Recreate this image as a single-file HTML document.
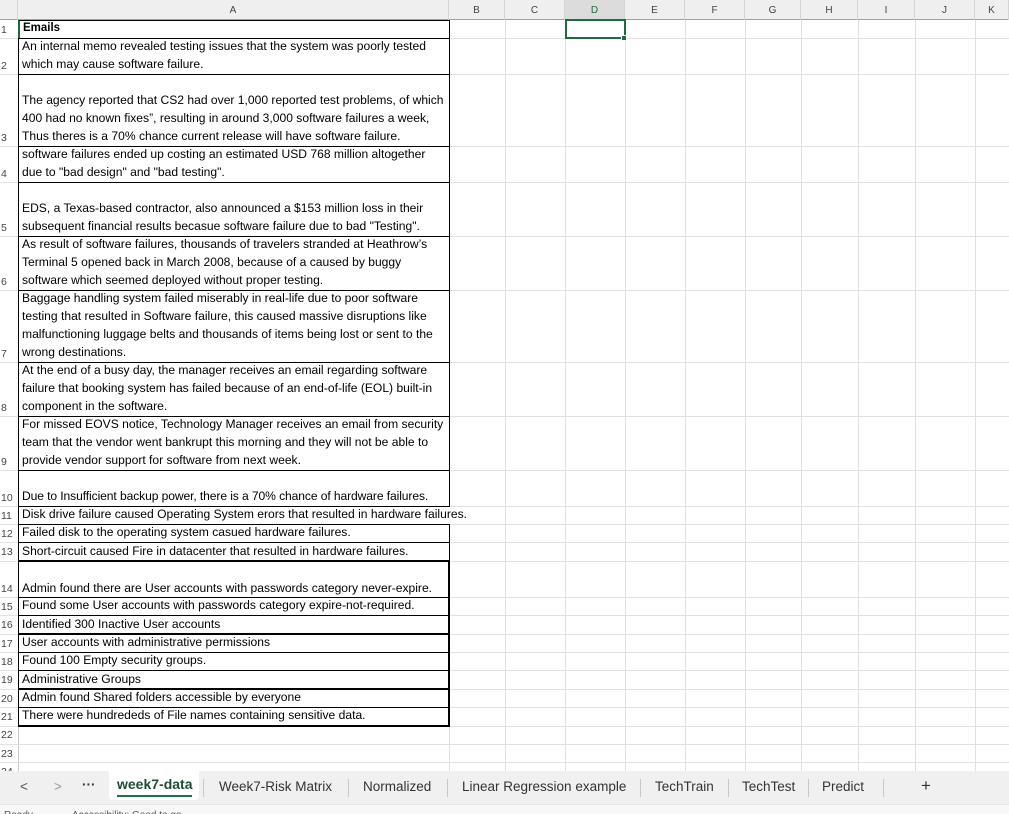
<!DOCTYPE html>
<html><head><meta charset="utf-8"><style>
*{margin:0;padding:0;box-sizing:border-box}
body{width:1009px;height:814px;overflow:hidden;background:#fff;font-family:"Liberation Sans",Arial,sans-serif;font-size:11px;color:#000;position:relative}
.ch{position:absolute;top:0;height:20px;background:#efefef;border-bottom:1px solid #a0a0a0;}
.cl{position:absolute;top:0;height:20px;line-height:22px;text-align:center;color:#444;font-size:10px;border-right:1px solid #d4d4d4}
.vl{position:absolute;top:20px;height:751px;width:1px;background:#e1e1e1}
.hl{position:absolute;left:0;width:1009px;height:1px;background:#e1e1e1}
.rn{position:absolute;left:0;width:18px;font-size:10.5px;color:#444;padding-left:1px;line-height:14px}
.c{position:absolute;left:18px;width:432px;padding-left:3px;line-height:18px;display:flex;flex-direction:column;justify-content:flex-end;white-space:nowrap;border-left:1px solid #000;border-right:1px solid #000;border-top:1px solid #000;font-size:12.1px;padding-bottom:1px}
.tabs{position:absolute;left:0;top:771px;width:1009px;height:33px;background:#f0f0f0;font-size:13.5px;color:#333}
.tab{position:absolute;top:8px}
.sep{position:absolute;top:8px;width:1px;height:18px;background:#c8c8c8}
.status{position:absolute;left:0;top:804px;width:1009px;height:10px;background:#f8f8f8;border-top:1px solid #e6e6e6;overflow:hidden}
.t2{border-right:2px solid #000}
</style></head><body>
<div class="ch" style="left:0;width:1009px"></div>
<div class="cl" style="left:0;width:18px;"></div>
<div class="cl" style="left:18px;width:431px">A</div>
<div class="cl" style="left:449px;width:56px">B</div>
<div class="cl" style="left:505px;width:60px">C</div>
<div class="cl" style="left:565px;width:60px;background:#dcdcdc;color:#1e6b3c">D</div>
<div class="cl" style="left:625px;width:60px">E</div>
<div class="cl" style="left:685px;width:60px">F</div>
<div class="cl" style="left:745px;width:56px">G</div>
<div class="cl" style="left:801px;width:57px">H</div>
<div class="cl" style="left:858px;width:57px">I</div>
<div class="cl" style="left:915px;width:60px">J</div>
<div class="cl" style="left:975px;width:34px">K</div>
<div class="vl" style="left:18px;background:#c8c8c8"></div>
<div class="vl" style="left:449px"></div><div class="vl" style="left:505px"></div><div class="vl" style="left:565px"></div><div class="vl" style="left:625px"></div><div class="vl" style="left:685px"></div><div class="vl" style="left:745px"></div><div class="vl" style="left:801px"></div><div class="vl" style="left:858px"></div><div class="vl" style="left:915px"></div><div class="vl" style="left:975px"></div>
<div class="hl" style="top:38px"></div><div class="hl" style="top:74px"></div><div class="hl" style="top:146px"></div><div class="hl" style="top:182px"></div><div class="hl" style="top:236px"></div><div class="hl" style="top:290px"></div><div class="hl" style="top:362px"></div><div class="hl" style="top:416px"></div><div class="hl" style="top:470px"></div><div class="hl" style="top:506px"></div><div class="hl" style="top:524px"></div><div class="hl" style="top:542px"></div><div class="hl" style="top:561px"></div><div class="hl" style="top:597px"></div><div class="hl" style="top:615px"></div><div class="hl" style="top:634px"></div><div class="hl" style="top:652px"></div><div class="hl" style="top:670px"></div><div class="hl" style="top:689px"></div><div class="hl" style="top:707px"></div><div class="hl" style="top:726px"></div><div class="hl" style="top:744px"></div><div class="hl" style="top:762px"></div>

<div class="c" style="top:20px;height:18px;border-left:2px solid #1e6b3c;font-weight:bold;font-size:11.5px">Emails</div>
<div class="c" style="top:38px;height:36px"><div>An internal memo revealed testing issues that the system was poorly tested</div><div>which may cause software failure.</div></div>
<div class="c" style="top:74px;height:72px"><div>The agency reported that CS2 had over 1,000 reported test problems, of which</div><div>400 had no known fixes”, resulting in around 3,000 software failures a week,</div><div>Thus theres is a 70% chance current release will have software failure.</div></div>
<div class="c" style="top:146px;height:36px"><div>software failures ended up costing an estimated USD 768 million altogether</div><div>due to "bad design" and "bad testing".</div></div>
<div class="c" style="top:182px;height:54px"><div>EDS, a Texas-based contractor, also announced a $153 million loss in their</div><div>subsequent financial results becasue software failure due to bad "Testing".</div></div>
<div class="c" style="top:236px;height:54px"><div>As result of software failures, thousands of travelers stranded at Heathrow’s</div><div>Terminal 5 opened back in March 2008, because of a caused by buggy</div><div>software which seemed deployed without proper testing.</div></div>
<div class="c" style="top:290px;height:72px"><div>Baggage handling system failed miserably in real-life due to poor software</div><div>testing that resulted in Software failure, this caused massive disruptions like</div><div>malfunctioning luggage belts and thousands of items being lost or sent to the</div><div>wrong destinations.</div></div>
<div class="c" style="top:362px;height:54px"><div>At the end of a busy day, the manager receives an email regarding software</div><div>failure that booking system has failed because of an end-of-life (EOL) built-in</div><div>component in the software.</div></div>
<div class="c" style="top:416px;height:54px"><div>For missed EOVS notice, Technology Manager receives an email from security</div><div>team that the vendor went bankrupt this morning and they will not be able to</div><div>provide vendor support for software from next week.</div></div>
<div class="c" style="top:470px;height:36px;letter-spacing:-0.1px"><div>Due to Insufficient backup power, there is a 70% chance of hardware failures.</div></div>
<div class="c" style="top:507px;height:17px;width:470px;border-right:none;border-top:none;background:#fff;overflow:visible"><div>Disk drive failure caused Operating System erors that resulted in hardware failures.</div></div>
<div style="position:absolute;left:18px;top:506px;width:432px;height:1px;background:#000"></div>
<div class="c" style="top:524px;height:18px"><div>Failed disk to the operating system casued hardware failures.</div></div>
<div class="c" style="top:542px;height:19px"><div>Short-circuit caused Fire in datacenter that resulted in hardware failures.</div></div>
<div class="c t2" style="top:560px;height:38px;border-top:2px solid #000"><div>Admin found there are User accounts with passwords category never-expire.</div></div>
<div class="c t2" style="top:597px;height:18px"><div>Found some User accounts with passwords category expire-not-required.</div></div>
<div class="c t2" style="top:615px;height:19px"><div>Identified 300 Inactive User accounts</div></div>
<div class="c t2" style="top:633px;height:19px;border-top:2px solid #000"><div>User accounts with administrative permissions</div></div>
<div class="c t2" style="top:652px;height:18px"><div>Found 100 Empty security groups.</div></div>
<div class="c t2" style="top:670px;height:19px"><div>Administrative Groups</div></div>
<div class="c t2" style="top:688px;height:19px;border-top:2px solid #000"><div>Admin found Shared folders accessible by everyone</div></div>
<div class="c t2" style="top:707px;height:20px;border-bottom:2px solid #000"><div>There were hundrededs of File names containing sensitive data.</div></div>

<div class="rn" style="top:23px">1</div><div class="rn" style="top:59px">2</div><div class="rn" style="top:131px">3</div><div class="rn" style="top:167px">4</div><div class="rn" style="top:221px">5</div><div class="rn" style="top:275px">6</div><div class="rn" style="top:347px">7</div><div class="rn" style="top:401px">8</div><div class="rn" style="top:455px">9</div><div class="rn" style="top:491px">10</div><div class="rn" style="top:509px">11</div><div class="rn" style="top:527px">12</div><div class="rn" style="top:545px">13</div><div class="rn" style="top:582px">14</div><div class="rn" style="top:600px">15</div><div class="rn" style="top:618px">16</div><div class="rn" style="top:637px">17</div><div class="rn" style="top:655px">18</div><div class="rn" style="top:673px">19</div><div class="rn" style="top:692px">20</div><div class="rn" style="top:710px">21</div><div class="rn" style="top:728px">22</div><div class="rn" style="top:747px">23</div><div class="rn" style="top:765px">24</div>

<div style="position:absolute;left:565px;top:19px;width:61px;height:20px;border:2px solid #1e6b3c"></div>
<div style="position:absolute;left:621px;top:35px;width:6px;height:6px;background:#1e6b3c;border:1px solid #fff"></div>

<div class="tabs">
<div class="tab" style="left:20px;color:#555">&lt;</div>
<div class="tab" style="left:54px;color:#999">&gt;</div>
<div class="tab" style="left:82px;font-weight:bold;top:6px">···</div>
<div style="position:absolute;left:109px;top:0;width:90px;height:29px;background:#fff;border-radius:0 0 4px 4px"></div>
<div class="tab" style="left:117px;top:5px;font-weight:bold;font-size:14px;color:#1f4d33">week7-data</div>
<div style="position:absolute;left:117px;top:24px;width:75px;height:2px;background:#1e7145"></div>
<div class="sep" style="left:203px"></div>
<div class="tab" style="left:219px">Week7-Risk Matrix</div>
<div class="sep" style="left:348px"></div>
<div class="tab" style="left:363px">Normalized</div>
<div class="sep" style="left:447px"></div>
<div class="tab" style="left:462px">Linear Regression example</div>
<div class="sep" style="left:640px"></div>
<div class="tab" style="left:655px">TechTrain</div>
<div class="sep" style="left:728px"></div>
<div class="tab" style="left:742px">TechTest</div>
<div class="sep" style="left:808px"></div>
<div class="tab" style="left:822px">Predict</div>
<div class="sep" style="left:883px"></div>
<div class="tab" style="left:921px;font-size:17px;top:5px">+</div>
</div>
<div class="status"><div style="position:absolute;left:4px;top:5px;font-size:10px;color:#555">Ready</div><div style="position:absolute;left:72px;top:5px;font-size:10px;color:#555">Accessibility: Good to go</div></div>
</body></html>
